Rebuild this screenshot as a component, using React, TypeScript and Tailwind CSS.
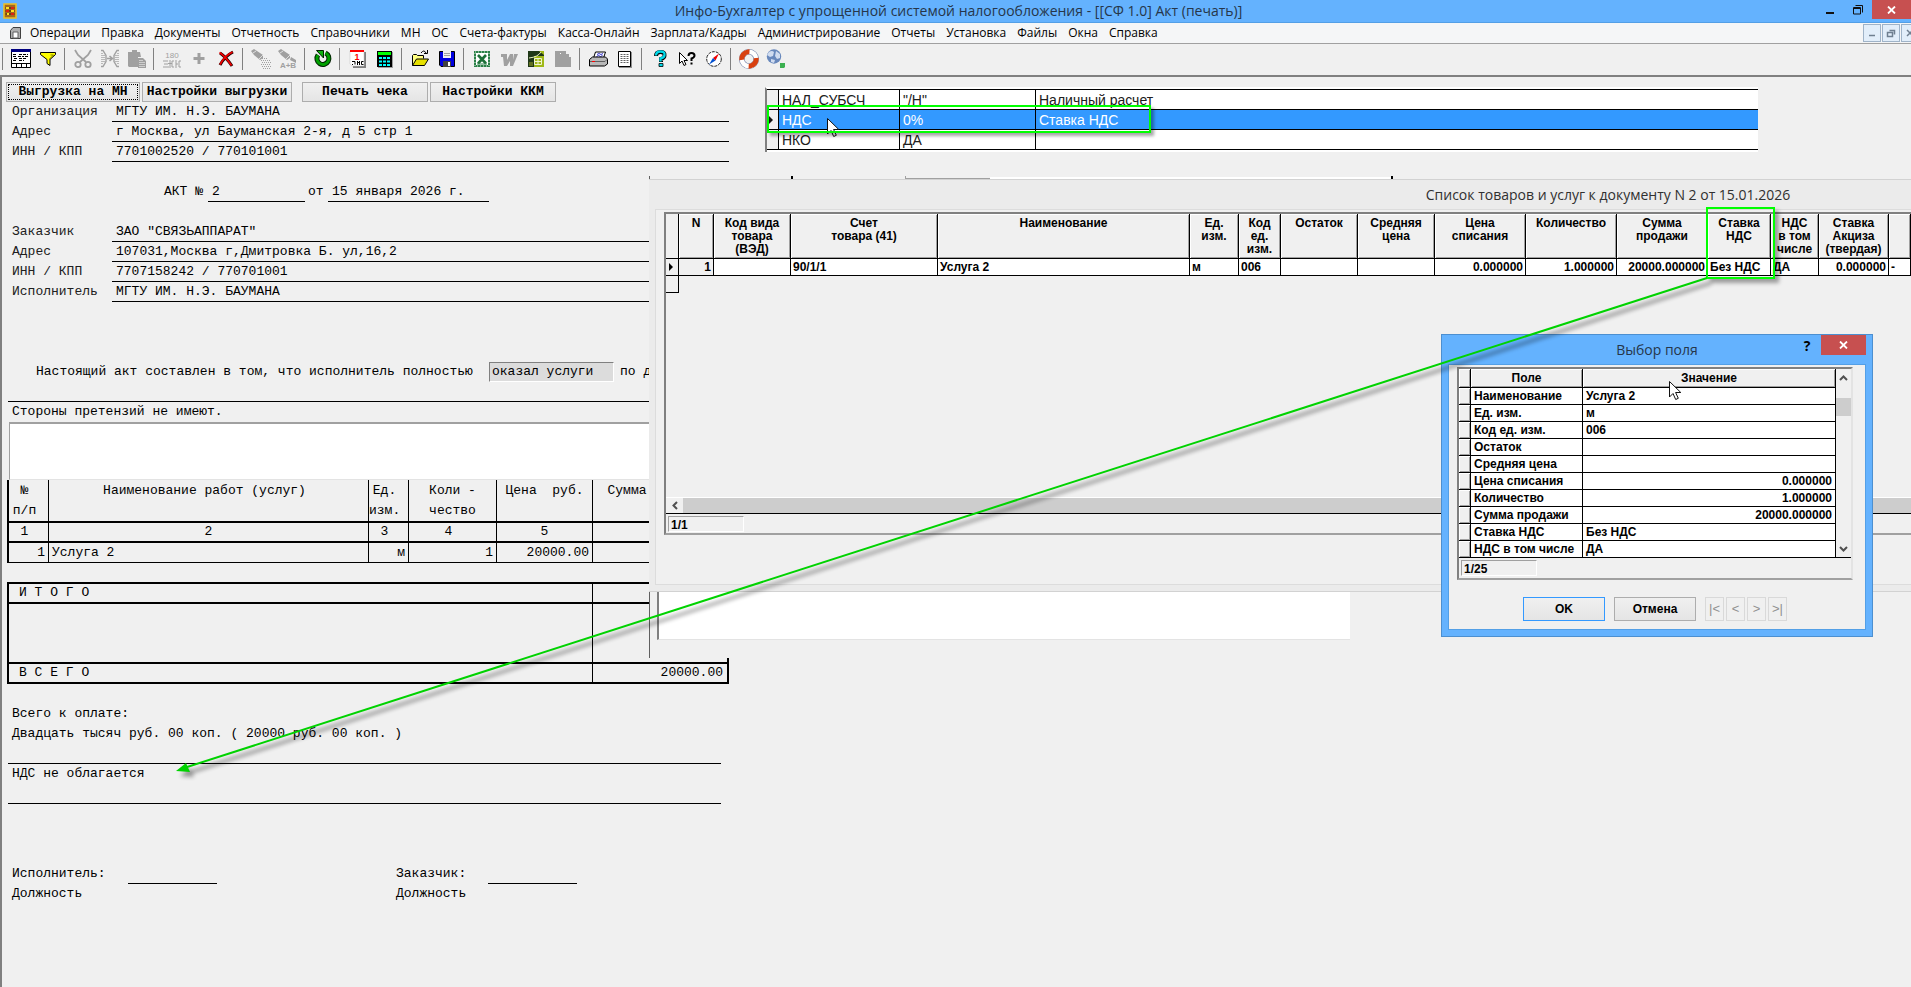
import { ReactNode } from 'react';

const menuItems = [
  'Операции', 'Правка', 'Документы', 'Отчетность', 'Справочники', 'МН', 'ОС', 'Счета-фактуры',
  'Касса-Онлайн', 'Зарплата/Кадры', 'Администрирование', 'Отчеты', 'Установка', 'Файлы', 'Окна', 'Справка',
];

interface Tool {
  name: string;
  icon: ReactNode;
}

const GRAY = '#a0a0a0';

// Toolbar icons, all drawn on a 20x20 grid
const toolGroups: Tool[][] = [
  [
    {
      name: 'Таблица',
      icon: (
        <>
          <path d="M0.5 0.5h19v18h-19z" fill="#fff" stroke="#000" />
          <path d="M0 0h20v3H0z" fill="#000080" />
          <path d="M0 14.5h20M5.5 15v4M10.5 15v4M15.5 15v4" stroke="#000" />
          <path d="M2 5.5h4M8 5.5h9M2 7.5h3M7 7.5h6M14 7.5h3M3 9.5h3M8 9.5h8M2 11.5h4M8 11.5h5" stroke="#000" strokeDasharray="3 1" />
        </>
      ),
    },
    {
      name: 'Фильтр',
      icon: (
        <>
          <path d="M2.5 3.5h15v2l-5.5 5v6l-3 -2v-4l-6.5 -5z" fill="#ffff00" stroke="#000" />
          <path d="M12.5 6l3 0 -4 4v5" fill="none" stroke="#808000" />
        </>
      ),
    },
  ],
  [
    {
      name: 'Вырезать',
      icon: (
        <g fill="none" stroke={GRAY} strokeWidth="1.8">
          <path d="M2 1l3 5 8 7M18 1l-3 5 -8 7" />
          <circle cx="5" cy="15.5" r="2.7" />
          <circle cx="15" cy="15.5" r="2.7" />
        </g>
      ),
    },
    {
      name: 'Разделить',
      icon: (
        <g fill="none" stroke={GRAY}>
          <path d="M1 1.5h2l3 5v6l-3 5h-2M19 1.500h-2l-3 5v6l3 5h2" strokeWidth="1.4" />
          <path d="M2 4v12M4 6v8M18 4v12M16 6v8" strokeDasharray="1 1" strokeWidth="1.4" />
          <path d="M7 9.5h5M9.500 7l3 2.5 -3 2.5" strokeWidth="1.6" />
        </g>
      ),
    },
    {
      name: 'Вставить',
      icon: (
        <>
          <path d="M1 3h4V1h5v2h3l1 5h-3v10H2l-1 -1z" fill={GRAY} />
          <path d="M11 9h5l3 3v7h-8z" fill={GRAY} />
          <path d="M12.5 11.5h3M12.5 13.5h5M12.5 15.5h5M12.5 17.5h5" stroke="#fff" strokeDasharray="1 1" />
        </>
      ),
    },
  ],
  [
    {
      name: 'Сумма прописью',
      icon: (
        <>
          <text x="10" y="9" fontSize="8" textAnchor="middle" fill={GRAY} fontFamily="Liberation Sans">180</text>
          <path d="M1 12h5M2 15h4M1 18h6M8 11v8M12 12h-2v6h2M14 11v8M14 15h2M19 12h-2v6h2M6 14.5h4" stroke={GRAY} fill="none" />
        </>
      ),
    },
    { name: 'Добавить', icon: <path d="M10 4v11M4.5 9.5h11" stroke={GRAY} strokeWidth="3" /> },
    {
      name: 'Удалить',
      icon: (
        <>
          <path d="M4 4q6 4 12 13M17 3q-8 4 -13 13" stroke="#200000" strokeWidth="3" fill="none" />
          <path d="M3.500 3.500q6 4 12 13M16.5 3q-8 4 -12.5 12.500" stroke="#f00000" strokeWidth="1.800" fill="none" />
        </>
      ),
    },
  ],
  [
    {
      name: 'Найти',
      icon: (
        <>
          <path d="M0 2l3 -2 9 6v3l-3 2 -6 -5z" fill={GRAY} />
          <path d="M2 4l3 -2M8 10l4 -4" stroke="#e0e0e0" />
          <path d="M11 9.500h5M10 11.5h9M11 13.5h9M10 15.5h9M11 17.5h9M12 19.5h7" stroke={GRAY} strokeDasharray="1 1" />
        </>
      ),
    },
    {
      name: 'Заменить',
      icon: (
        <>
          <path d="M0 2l3 -2 9 6v3l-3 2 -6 -5z M13 8l5 3v3l-6 -3z" fill={GRAY} />
          <path d="M2 4l3 -2M8 10l4 -4" stroke="#e0e0e0" />
          <text x="10" y="19" fontSize="8" fontWeight="700" textAnchor="middle" fill={GRAY} fontFamily="Liberation Sans">A+B</text>
        </>
      ),
    },
  ],
  [
    {
      name: 'Обновить',
      icon: (
        <>
          <path d="M12.500 4A6 6 0 1 1 5 6" fill="none" stroke="#002000" strokeWidth="5" />
          <path d="M12.500 4A6 6 0 1 1 5 6" fill="none" stroke="#00a000" strokeWidth="3" />
          <path d="M3.500 1.500h7v7.500z" fill="#10b010" stroke="#002000" />
        </>
      ),
    },
  ],
  [
    {
      name: 'Календарь',
      icon: (
        <>
          <path d="M5 3h13v16H5z" fill="#808080" />
          <path d="M2 2h14v15H4l-2 -2z" fill="#fff" stroke="#c0c0c0" strokeWidth="0.5" />
          <path d="M2 1h14v2H2z" fill="#f00" />
          <text x="9" y="11" fontSize="9" fontWeight="700" textAnchor="middle" fill="#f00" fontFamily="Liberation Sans">1</text>
          <path d="M4 12.5h3v3M9.500 12v4M9.500 13.500h2M11.500 12v4M15.500 12.5h-2v3h2M4 15.500h1" stroke="#000" fill="none" />
        </>
      ),
    },
    {
      name: 'Калькулятор',
      icon: (
        <>
          <path d="M3 3h15v16H3z" fill="#a0a0a0" />
          <path d="M2 2h15v16H2z" fill="#000" />
          <path d="M3 3h13v3H3z" fill="#00ff00" />
          <path d="M4 9h11M4 12.500h11M4 16h11" stroke="#00ffff" strokeWidth="2" strokeDasharray="3 1" />
        </>
      ),
    },
  ],
  [
    {
      name: 'Открыть',
      icon: (
        <>
          <path d="M2.5 16.5v-10l1 -1h3l1 1h6v3" fill="#ffff80" stroke="#000" />
          <path d="M2.5 16.5l4 -6.5h12l-4 6.5z" fill="#e6e000" stroke="#000" />
          <path d="M11 4q3 -4 5 0M17.500 1v3.5h-3.500" fill="none" stroke="#000" />
        </>
      ),
    },
    {
      name: 'Сохранить',
      icon: (
        <>
          <path d="M2.5 2.5h15v15H4l-1.5 -1.5z" fill="#0000e0" stroke="#000" />
          <path d="M6 2h8v7H6z" fill="#f0f0f0" />
          <path d="M7 4.500h6M7 6.500h6" stroke="#a0a0a0" />
          <path d="M6 12h8v6H6z" fill="#404040" />
          <path d="M11 13h2v4h-2z" fill="#fff" />
        </>
      ),
    },
  ],
  [
    {
      name: 'Excel',
      icon: (
        <>
          <path d="M3 3h14v14H3z" fill="#fff" stroke="#2a8048" strokeWidth="2" />
          <path d="M3 3h14v14H3z" fill="none" stroke="#d8ecd8" strokeDasharray="1 2" />
          <path d="M6 6l8 8.5M14 6l-8 8.5" stroke="#1d7038" strokeWidth="2.6" />
          <path d="M5 15h10" stroke="#2a8048" />
        </>
      ),
    },
    { name: 'Word', icon: <path d="M2 5h6v2l0 4 3 -6h3l0 6 1 -6h4l-5 12h-3v-5l-3 5h-3l-1 -9h-2z" fill={GRAY} /> },
    {
      name: 'Calc',
      icon: (
        <>
          <path d="M2 2h16v16H2z" fill="#203818" />
          <path d="M8 7h10v11H8zM13 2h5v4z" fill="#a0b818" />
          <path d="M3 9q9 -1 12 -6" stroke="#e8f0c0" fill="none" />
          <path d="M3 13h4v4H3z" fill="#607020" />
          <path d="M8.500 9.500h7v6h-7zM8.500 12.500h7M12 9.500v6" stroke="#f0f4d0" fill="none" />
        </>
      ),
    },
    {
      name: 'Writer',
      icon: (
        <>
          <path d="M2 2h11v3h3v3h2v10H2z" fill={GRAY} />
          <path d="M7 4h1v1H7z" fill="#fff" />
        </>
      ),
    },
  ],
  [
    {
      name: 'Печать',
      icon: (
        <>
          <path d="M5.5 9l2 -6h10l-2 6z" fill="#fff" stroke="#000" />
          <path d="M9 5.5l2 -1 2 1 2 -1M8.5 7.5l2 -1 2 1 2 -1" stroke="#3030d0" fill="none" />
          <path d="M1.5 10.5l3 -2.5h13l2 2v5l-3 2h-15z" fill="#b8b8b8" stroke="#000" />
          <path d="M2 12.5h15l2 -2" stroke="#606060" fill="none" />
          <path d="M4 12h3v1H4z" fill="#f00" />
        </>
      ),
    },
    {
      name: 'Просмотр',
      icon: (
        <>
          <path d="M4 3h13v16H4z" fill="#909090" />
          <path d="M3.5 2.5h12v15h-12z" fill="#fff" stroke="#000" />
          <path d="M5.5 5.5h8M5.5 7.5h8M5.5 9.5h8M5.5 11.5h8M5.5 13.5h8" stroke="#606060" strokeDasharray="2 1" />
        </>
      ),
    },
  ],
  [
    {
      name: 'Справка',
      icon: (
        <>
          <path d="M6 7q0 -4 4.5 -4t4 3.5q0 2.5 -3.5 3.5v3" fill="none" stroke="#000" strokeWidth="4" />
          <path d="M6 6.5q0 -4 4.5 -4t4 3.5q0 2.5 -4 3.5v3" fill="none" stroke="#00d8e8" strokeWidth="2.4" />
          <path d="M9 14.5h4v3H9z" fill="#00d8e8" stroke="#000" strokeWidth="0.8" />
        </>
      ),
    },
    {
      name: 'Контекстная справка',
      icon: (
        <>
          <path d="M2.5 3.5v11l2.5 -2.5 2 4.5 2 -1 -2 -4h3.5z" fill="#fff" stroke="#000" />
          <path d="M11.5 7q0 -3 3 -3t3 2.5q0 2 -3 3v2.5M13.5 14.5h2" fill="none" stroke="#000" strokeWidth="2" />
        </>
      ),
    },
    {
      name: 'Компас',
      icon: (
        <>
          <circle cx="10" cy="10" r="7.3" fill="#fff" stroke="#202020" strokeDasharray="3 1" />
          <path d="M15 4.5l-3.5 7 -2.5 -2.5z" fill="#f00000" />
          <path d="M5 15.5l6.5 -4 -2.5 -2.5z" fill="#0050d0" />
        </>
      ),
    },
  ],
  [
    {
      name: 'Поддержка',
      icon: (
        <>
          <circle cx="10" cy="10" r="7.2" fill="none" stroke="#7080a8" strokeWidth="5.6" />
          <circle cx="10" cy="10" r="7.2" fill="none" stroke="#fff" strokeWidth="4.4" />
          <circle cx="10" cy="10" r="7.2" fill="none" stroke="#d84010" strokeWidth="5" strokeDasharray="12.6 10" transform="rotate(-8 10 10)" />
        </>
      ),
    },
    {
      name: 'Интернет',
      icon: (
        <>
          <circle cx="8" cy="7.5" r="7.2" fill="#6888bc" />
          <path d="M3 3q3 -2 5 0l-1 4 -3 1 -3 -2zM10 2l4 3v4l-3 1 -2 -3zM5 10l4 1 -1 3 -3 -1z" fill="#d0dcf0" />
          <path d="M14 14h5v4l-1 1h-4z" fill="#3cb050" />
        </>
      ),
    },
  ],
];

const params = [
  { name: 'НАЛ_СУБСЧ', value: '"/Н"', note: 'Наличный расчет' },
  { name: 'НДС', value: '0%', note: 'Ставка НДС', selected: true },
  { name: 'НКО', value: 'ДА', note: '' },
];

interface Column {
  title: string[];
  value: string;
  width: string;
  right?: boolean;
}

const columns: Column[] = [
  { title: ['N'], value: '1', width: 'w-[35px]', right: true },
  { title: ['Код вида', 'товара', '(ВЭД)'], value: '', width: 'w-[77px]' },
  { title: ['Счет', 'товара (41)'], value: '90/1/1', width: 'w-[147px]' },
  { title: ['Наименование'], value: 'Услуга 2', width: 'w-[252px]' },
  { title: ['Ед.', 'изм.'], value: 'м', width: 'w-[49px]' },
  { title: ['Код', 'ед.', 'изм.'], value: '006', width: 'w-[42px]' },
  { title: ['Остаток'], value: '', width: 'w-[77px]' },
  { title: ['Средняя', 'цена'], value: '', width: 'w-[77px]' },
  { title: ['Цена', 'списания'], value: '0.000000', width: 'w-[91px]', right: true },
  { title: ['Количество'], value: '1.000000', width: 'w-[91px]', right: true },
  { title: ['Сумма', 'продажи'], value: '20000.000000', width: 'w-[91px]', right: true },
  { title: ['Ставка', 'НДС'], value: 'Без НДС', width: 'w-[63px]' },
  { title: ['НДС', 'в том', 'числе'], value: 'ДА', width: 'w-[48px]' },
  { title: ['Ставка', 'Акциза', '(твердая)'], value: '0.000000', width: 'w-[70px]', right: true },
  { title: [''], value: '-', width: 'w-auto' },
];

const fields = [
  { name: 'Наименование', value: 'Услуга 2' },
  { name: 'Ед. изм.', value: 'м' },
  { name: 'Код ед. изм.', value: '006' },
  { name: 'Остаток', value: '' },
  { name: 'Средняя цена', value: '' },
  { name: 'Цена списания', value: '0.000000', right: true },
  { name: 'Количество', value: '1.000000', right: true },
  { name: 'Сумма продажи', value: '20000.000000', right: true },
  { name: 'Ставка НДС', value: 'Без НДС' },
  { name: 'НДС в том числе', value: 'ДА' },
];

const signatures = [
  { id: 'sign-executor', label: 'Исполнитель:', width: 'w-[116px]' },
  { id: 'sign-client', label: 'Заказчик:', width: 'w-[92px]' },
];

function DocField({ id, label, value }: { id: string; label: string; value: string }) {
  return (
    <div className="flex h-5 items-stretch pl-1">
      <label htmlFor={id} className="w-[100px] leading-5 text-[#202020]">{label}</label>
      <input id={id} defaultValue={value} className="min-w-0 flex-1 border-b border-black bg-transparent pl-1 font-medium outline-none" />
    </div>
  );
}

function DocButton({ children, className }: { children: ReactNode; className: string }) {
  return (
    <button className={`h-5 border border-[#adadad] bg-linear-to-b from-[#f0f0f0] to-[#e5e5e5] font-bold leading-4 whitespace-nowrap ${className}`}>
      {children}
    </button>
  );
}

function Pointer({ className }: { className: string }) {
  return (
    <svg className={`absolute pointer-events-none ${className}`} width="13" height="20" viewBox="0 0 13 20">
      <path d="M0.5 0.5v15.5l3.5 -3.5 2.7 6 2.6 -1.2 -2.7 -5.8h5.2z" fill="#fff" stroke="#111" />
    </svg>
  );
}

function TitleBar() {
  return (
    <header className="flex h-[23px] items-center border-b border-[#539fe6] bg-[#64b2fe]">
      <svg className="ml-[3px] w-[14px] shrink-0" height="16" viewBox="0 0 14 16">
        <path d="M1 1h12v14H1z" fill="#a06820" stroke="#f0c020" strokeWidth="1.5" />
        <path d="M2.5 5h9M2.5 8h9M2.5 11h9" stroke="#402000" />
        <path d="M3 5h3M8 8h3M4 11h2" stroke="#ffe020" strokeWidth="2" />
        <path d="M8 5h3M3 8h3M8 11h3" stroke="#e02010" strokeWidth="2" />
      </svg>
      <h1 className="flex-1 pl-[84px] text-center font-['Open_Sans',sans-serif] text-[14px] leading-5 text-[#26364a]">
        Инфо-Бухгалтер с упрощенной системой налогообложения - [[СФ 1.0] Акт (печать)]
      </h1>
      <div className="flex items-start self-stretch">
        <button aria-label="Свернуть" className="flex h-[19px] w-7 items-center justify-center">
          <svg width="10" height="10"><path d="M1 7h8v2H1z" fill="#111" /></svg>
        </button>
        <button aria-label="Развернуть" className="flex h-[19px] w-7 items-center justify-center">
          <svg width="10" height="11"><path d="M0.5 3.5h7v6.5h-7zM0.5 4.5h7M2.5 1.5h7v7" fill="none" stroke="#111" /></svg>
        </button>
        <button aria-label="Закрыть" className="flex h-[19px] w-[39px] items-center justify-center bg-[#c75050]">
          <svg width="9" height="8"><path d="M1 0.5l7 7M8 0.5l-7 7" stroke="#fff" strokeWidth="1.8" /></svg>
        </button>
      </div>
    </header>
  );
}

function MenuBar() {
  return (
    <nav className="flex h-[21px] items-center border-b border-[#a0a0a0] bg-[#f5f6f7] font-['Open_Sans',sans-serif] text-[12px] text-black">
      <svg className="ml-[10px] shrink-0" width="11" height="12" viewBox="0 0 11 12">
        <path d="M0.5 3.5l2.5 -3h7.5v11h-10z" fill="#b0b0b0" stroke="#404040" />
        <path d="M3 5h5v6H3z" fill="#fff" stroke="#606060" />
      </svg>
      <div className="ml-[9px] flex gap-[11px]">
        {menuItems.map((item) => (
          <a key={item} href="#" className="leading-5 whitespace-nowrap">{item}</a>
        ))}
      </div>
      <div className="-mr-2 ml-auto flex shrink-0 gap-px">
        {['M5 10.5h6', 'M4.5 7.5h5v4h-5zM6.5 5.5h5v4', 'M5 5l6 6M11 5l-6 6'].map((d) => (
          <button key={d} aria-label="Окно документа" className="h-[18px] w-[18px] border border-[#9fb3c8] bg-[#e2eefa]">
            <svg width="16" height="16"><path d={d} fill="none" stroke="#6f7f90" strokeWidth="1.5" /></svg>
          </button>
        ))}
      </div>
    </nav>
  );
}

function Toolbar() {
  return (
    <div className="flex h-[33px] items-center border-b-2 border-[#808080] pb-[2px] pl-[2px]">
      {toolGroups.map((group, idx) => (
        <div key={idx} className="mr-[3px] flex items-center">
          <div className="mr-[2px] h-[22px] w-[3px] border-l border-[#808080]"></div>
          {group.map((tool) => (
            <button key={tool.name} aria-label={tool.name} className="flex h-6 w-[27px] items-center justify-center">
              <svg width="20" height="20" viewBox="0 0 20 20">{tool.icon}</svg>
            </button>
          ))}
        </div>
      ))}
    </div>
  );
}

function ActDocument() {
  return (
    <section className="w-[729px] shrink-0 border-l-2 border-[#808080] pt-[5px] font-['Liberation_Mono',monospace] text-[13px] text-black">
      <div className="ml-1 flex">
        <DocButton className="w-[134px] outline-1 -outline-offset-3 outline-dotted outline-black">Выгрузка на МН</DocButton>
        <DocButton className="ml-[2px] w-[150px]">Настройки выгрузки</DocButton>
        <DocButton className="ml-[10px] w-[126px]">Печать чека</DocButton>
        <DocButton className="ml-[2px] w-[126px]">Настройки ККМ</DocButton>
      </div>

      <div className="ml-[6px]">
        <DocField id="org" label="Организация" value="МГТУ ИМ. Н.Э. БАУМАНА" />
        <DocField id="org-address" label="Адрес" value="г Москва, ул Бауманская 2-я, д 5 стр 1" />
        <DocField id="org-inn" label="ИНН / КПП" value="7701002520 / 770101001" />

        <div className="mt-5 flex h-5 pl-[156px]">
          <label htmlFor="act-no" className="w-11 leading-5">АКТ №</label>
          <input id="act-no" defaultValue="2" className="w-[97px] border-b border-black bg-transparent pl-1" />
          <label htmlFor="act-date" className="w-[23px] pl-[3px] leading-5">от</label>
          <input id="act-date" defaultValue="15 января 2026 г." className="w-[161px] border-b border-black bg-transparent pl-1" />
        </div>

        <div className="mt-5">
          <DocField id="client" label="Заказчик" value={'ЗАО "СВЯЗЬАППАРАТ"'} />
          <DocField id="client-address" label="Адрес" value="107031,Москва г,Дмитровка Б. ул,16,2" />
          <DocField id="client-inn" label="ИНН / КПП" value="7707158242 / 770701001" />
          <DocField id="executor" label="Исполнитель" value="МГТУ ИМ. Н.Э. БАУМАНА" />
        </div>

        <div className="mt-[60px] flex h-5 pl-7 leading-5 whitespace-nowrap">
          <label htmlFor="action" className="w-[453px] shrink-0">Настоящий акт составлен в том, что исполнитель полностью</label>
          <input id="action" defaultValue="оказал услуги" className="w-[125px] shrink-0 border border-t-[#808080] border-r-white border-b-white border-l-[#808080] bg-[#dcdcdc] pl-[2px]" />
          <span className="ml-[6px]">по договору</span>
        </div>
        <div className="h-5 border-b border-black"></div>
        <label htmlFor="remarks" className="block h-5 pl-1 leading-5">Стороны претензий не имеют.</label>
        <textarea id="remarks" className="ml-px block h-[58px] w-[719px] resize-none border border-t-2 border-[#a0a0a0] border-b-[#e3e3e3] bg-white"></textarea>

        <table className="-ml-px w-[722px] table-fixed border-separate border-spacing-0 border-l-2 border-black">
          <colgroup>
            <col className="w-[40px]" />
            <col className="w-[320px]" />
            <col className="w-[40px]" />
            <col className="w-[88px]" />
            <col className="w-[96px]" />
            <col />
          </colgroup>
          <thead>
            <tr className="h-[42px] leading-5 *:border-r *:border-b-2 *:border-black *:py-0 *:pt-px *:align-top *:font-normal">
              <th className="pr-2 pl-0">№<br />п/п</th>
              <th className="pr-2 pl-0">Наименование работ (услуг)</th>
              <th className="pr-2 pl-0">Ед.<br />изм.</th>
              <th className="px-0">Коли -<br />чество</th>
              <th className="px-0 whitespace-pre">Цена  руб.</th>
              <th className="pr-7 pl-0">Сумма  руб.</th>
            </tr>
          </thead>
          <tbody>
            <tr className="h-5 text-center leading-[18px] *:border-r *:border-b-2 *:border-black *:py-0">
              <td className="pr-2 pl-0">1</td>
              <td className="px-0">2</td>
              <td className="pr-2 pl-0">3</td>
              <td className="pr-2 pl-0">4</td>
              <td className="px-0">5</td>
              <td className="px-0">6</td>
            </tr>
            <tr className="h-5 leading-[19px] *:border-r *:border-b *:border-black *:px-[3px] *:py-0">
              <td className="text-right">1</td>
              <td>Услуга 2</td>
              <td className="text-right">м</td>
              <td className="text-right">1</td>
              <td className="text-right">20000.00</td>
              <td className="text-right">20000.00</td>
            </tr>
          </tbody>
        </table>

        <table className="mt-[19px] -ml-px w-[722px] table-fixed border-separate border-spacing-0 border-2 border-b-0 border-black">
          <tbody>
            <tr className="h-5 leading-[18px] *:border-b-2 *:border-black *:py-0">
              <td className="w-[584px] border-r pl-[10px]">И Т О Г О</td>
              <td></td>
            </tr>
            <tr className="h-[60px] *:border-b-2 *:border-black">
              <td className="border-r"></td>
              <td></td>
            </tr>
            <tr className="h-5 leading-[18px] *:border-b-2 *:border-black *:py-0">
              <td className="border-r pl-[10px]">В С Е Г О</td>
              <td className="pr-1 text-right">20000.00</td>
            </tr>
          </tbody>
        </table>

        <div className="mt-5 w-[713px] leading-5">
          <p className="pl-1">Всего к оплате:</p>
          <p className="pl-1 font-medium">Двадцать тысяч руб. 00 коп. ( 20000 руб. 00 коп. )</p>
          <div className="h-5 border-b border-black"></div>
          <p className="pl-1 font-medium">НДС не облагается</p>
          <div className="h-5 border-b border-black"></div>
        </div>

        <div className="mt-[60px] flex pl-1 leading-5">
          {signatures.map((sign) => (
            <div key={sign.id} className="w-[384px] shrink-0">
              <div className="flex h-5">
                <label htmlFor={sign.id} className={sign.width}>{sign.label}</label>
                <input id={sign.id} className="w-[89px] border-b border-black bg-transparent" />
              </div>
              <p>Должность</p>
            </div>
          ))}
        </div>
      </div>
    </section>
  );
}

function ParamsTable() {
  return (
    <section className="min-w-0 flex-1 pt-[10px] pr-[153px] pl-9">
      <div className="relative">
        <table className="w-full table-fixed border-separate border-spacing-0 border-t-2 border-l-2 border-t-white border-l-[#808080] bg-white font-['Liberation_Sans',sans-serif] text-[14px] text-[#202020]">
          <colgroup>
            <col className="w-[12px]" />
            <col className="w-[121px]" />
            <col className="w-[136px]" />
            <col />
          </colgroup>
          <tbody>
            {params.map((row) => (
              <tr
                key={row.name}
                className={`h-5 leading-[18px] *:border-t *:border-black *:py-0 ${row.selected ? '*:bg-[#3399ff] text-white' : ''}`}
              >
                <td className="border-r border-black !bg-[#f0f0f0] p-0">
                  {row.selected && <svg width="8" height="10"><path d="M2 1v8l4 -4z" fill="#111" /></svg>}
                </td>
                <td className={`border-r pl-[3px] ${row.selected ? 'border-r-white' : 'border-r-black'}`}>{row.name}</td>
                <td className={`border-r pl-[3px] ${row.selected ? 'border-r-white' : 'border-r-black'}`}>{row.value}</td>
                <td className="pl-[3px]">{row.note}</td>
              </tr>
            ))}
            <tr className="h-[3px] *:border-t *:border-black *:p-0">
              <td colSpan={4}></td>
            </tr>
          </tbody>
        </table>
        <Pointer className="top-[31px] left-[62px]" />
        <div className="absolute top-[18px] left-[2px] h-[28px] w-[384px] border-2 border-[#00ff00] shadow-[3px_3px_3px_rgba(0,0,0,0.35)]"></div>
      </div>
    </section>
  );
}

function GoodsWindow() {
  return (
    <section className="absolute top-[176px] right-0 left-[649px] overflow-hidden bg-[#f0f0f0]">
      {/* Edges of the form lying under the goods list */}
      <div className="flex h-[3px] items-start border-l border-[#606060]">
        <div className="ml-[141px] h-[3px] w-[2px] bg-black"></div>
        <div className="ml-28 h-[3px] w-[85px] border-b border-l border-[#a0a0a0]"></div>
        <div className="h-[3px] w-[401px] border-b-2 border-white"></div>
        <div className="h-[3px] w-[2px] bg-black"></div>
      </div>

      <div className="border-y border-[#d2d2d2] bg-[#ebebeb] pb-[6px] pl-[6px]">
        <h2 className="h-[29px] pl-[650px] text-center font-['Open_Sans',sans-serif] text-[14px] leading-[30px] text-[#303030]">
          Список товаров и услуг к документу N 2 от 15.01.2026
        </h2>
        <div className="border border-r-0 border-[#dcdcdc] bg-[#f0f0f0] pt-[2px] pb-[49px] pl-2 font-['Liberation_Sans',sans-serif] text-[12px] font-bold text-black">
          <div className="border-t-2 border-b-2 border-l-2 border-[#808080] border-b-[#a0a0a0]">
            <table className="w-full table-fixed border-separate border-spacing-0">
              <thead>
                <tr className="h-[45px] leading-[13px]">
                  <th className="w-[13px] border-r border-b border-black p-0"></th>
                  {columns.map((col, idx) => (
                    <th
                      key={idx}
                      className={`border-r border-b border-black p-0 pt-[3px] align-top font-bold whitespace-nowrap shadow-[inset_1px_1px_#fff,inset_-1px_-1px_#a0a0a0] ${col.width}`}
                    >
                      {col.title.map((line) => (
                        <div key={line}>{line}</div>
                      ))}
                    </th>
                  ))}
                </tr>
              </thead>
              <tbody>
                <tr className="h-[17px] leading-4">
                  <td className="border-r border-b border-black p-0">
                    <svg width="9" height="9"><path d="M3 0v8l4 -4z" fill="#000" /></svg>
                  </td>
                  {columns.map((col, idx) => (
                    <td
                      key={idx}
                      className={`overflow-hidden border-r border-b border-black px-[2px] py-0 whitespace-nowrap ${idx === 0 ? 'bg-[#f0f0f0]' : 'bg-white'} ${col.right ? 'text-right' : ''}`}
                    >
                      {col.value}
                    </td>
                  ))}
                </tr>
                <tr className="h-[17px]">
                  <td className="border-r border-b border-black p-0"></td>
                </tr>
              </tbody>
            </table>
            <div className="mt-[204px] flex h-4 items-center border-t border-white bg-[#cdcdcd]">
              <button aria-label="Влево" className="flex h-full w-[17px] items-center justify-center bg-[#f0f0f0]">
                <svg width="6" height="9"><path d="M5 1l-3.5 3.5 3.5 3.5" fill="none" stroke="#505050" strokeWidth="2" /></svg>
              </button>
            </div>
            <div className="h-[20px] border-t border-black pt-[2px] pl-[2px]">
              <div className="h-4 w-[76px] border border-t-[#a0a0a0] border-r-white border-b-white border-l-[#a0a0a0] pl-[2px] leading-4">1/1</div>
            </div>
          </div>
        </div>
      </div>

      <div className="h-[66px] border-l border-[#606060] pl-[7px]">
        <textarea aria-label="Примечание" className="block h-[48px] w-[693px] resize-none border-b border-l-2 border-b-[#e3e3e3] border-l-[#808080] bg-white"></textarea>
      </div>
    </section>
  );
}

function FieldDialog() {
  return (
    <section
      role="dialog"
      aria-labelledby="dialog-title"
      className="absolute top-[334px] left-[1441px] w-[432px] border border-[#4c8fd0] bg-[#64b2fe] px-[6px] pb-[6px] font-['Liberation_Sans',sans-serif] text-[12px] font-bold text-black"
    >
      <div className="relative flex h-[29px]">
        <h2 id="dialog-title" className="flex-1 text-center font-['Open_Sans',sans-serif] text-[14px] leading-[30px] font-normal text-[#26364a]">Выбор поля</h2>
        <button aria-label="Справка" className="absolute top-0 right-[45px] h-5 w-7 font-['Open_Sans',sans-serif] text-[14px]">?</button>
        <button aria-label="Закрыть" className="absolute top-0 right-0 flex h-5 w-[45px] items-center justify-center bg-[#c75050]">
          <svg width="9" height="8"><path d="M1 0.5l7 7M8 0.5l-7 7" stroke="#fff" strokeWidth="1.8" /></svg>
        </button>
      </div>

      <div className="border border-[#539fe6] bg-[#f0f0f0] pt-[2px] pr-3 pb-2 pl-2">
        <div className="border-2 border-t-[#808080] border-r-[#e3e3e3] border-b-[#a0a0a0] border-l-[#808080]">
          <div className="flex">
            <table className="min-w-0 flex-1 table-fixed border-separate border-spacing-0">
              <thead>
                <tr className="h-[19px] leading-4 *:border-r *:border-b *:border-black *:p-0 *:shadow-[inset_1px_1px_#fff,inset_-1px_-1px_#a0a0a0]">
                  <th className="w-[12px]"></th>
                  <th className="w-[112px]">Поле</th>
                  <th>Значение</th>
                </tr>
              </thead>
              <tbody>
                {fields.map((field) => (
                  <tr key={field.name} className="h-[17px] leading-4 *:border-r *:border-b *:border-black *:px-[3px] *:py-0">
                    <td className="bg-[#f0f0f0] shadow-[inset_1px_1px_#fff,inset_-1px_-1px_#a0a0a0]"></td>
                    <td className="bg-white whitespace-nowrap">{field.name}</td>
                    <td className={`bg-white ${field.right ? 'text-right' : ''}`}>{field.value}</td>
                  </tr>
                ))}
              </tbody>
            </table>
            <div className="flex w-[15px] shrink-0 flex-col items-center border-b border-black pt-[6px] pb-[5px]">
              <svg width="9" height="6"><path d="M1 5l3.5 -3.5 3.5 3.5" fill="none" stroke="#505050" strokeWidth="2" /></svg>
              <div className="mt-[17px] h-[18px] w-full bg-[#cdcdcd]"></div>
              <svg className="mt-auto" width="9" height="6"><path d="M1 1l3.5 3.5 3.5 -3.5" fill="none" stroke="#505050" strokeWidth="2" /></svg>
            </div>
          </div>
          <div className="h-5 pt-[2px] pl-[2px]">
            <div className="h-4 w-[76px] border border-t-[#a0a0a0] border-r-white border-b-white border-l-[#a0a0a0] pl-[2px] leading-4">1/25</div>
          </div>
        </div>

        <div className="mt-[17px] flex h-6 justify-center">
          <button className="w-[82px] border border-[#3399ff] bg-linear-to-b from-[#f0f0f0] to-[#e5e5e5]">OK</button>
          <button className="ml-[9px] w-[82px] border border-[#adadad] bg-linear-to-b from-[#f0f0f0] to-[#e5e5e5]">Отмена</button>
          <div className="ml-[9px] flex gap-[2px] text-[#909090]">
            {['|<', '<', '>', '>|'].map((label) => (
              <button key={label} disabled className="w-[19px] border border-[#d9d9d9] text-[13px] font-normal">{label}</button>
            ))}
          </div>
        </div>
      </div>
      <Pointer className="top-[46px] left-[227px]" />
    </section>
  );
}

// Highlight frame on the VAT column and the arrow leading to the VAT line of the act
function Annotations() {
  return (
    <>
      <div className="pointer-events-none absolute top-[207px] left-[1706px] h-[72px] w-[69px] border-2 border-[#00ff00] shadow-[4px_4px_4px_rgba(0,0,0,0.35)]"></div>
      <svg className="pointer-events-none absolute inset-0 h-full w-full">
        <defs>
          <filter id="soft" x="-5%" y="-5%" width="110%" height="110%">
            <feGaussianBlur stdDeviation="2" />
          </filter>
        </defs>
        <g filter="url(#soft)" opacity="0.4" transform="translate(4 5)">
          <path d="M1707 278L184 768" stroke="#000" strokeWidth="3" />
          <path d="M176 771l10 -8 4 9z" fill="#000" />
        </g>
        <path d="M1707 278L184 768" stroke="#00d200" strokeWidth="2" />
        <path d="M176 771l10 -8 4 9z" fill="#00d200" />
      </svg>
    </>
  );
}

export default function App() {
  return (
    <main className="relative flex min-h-screen flex-col overflow-hidden bg-[#f0f0f0]">
      <TitleBar />
      <MenuBar />
      <Toolbar />
      <div className="flex flex-1">
        <ActDocument />
        <ParamsTable />
      </div>
      <GoodsWindow />
      <FieldDialog />
      <Annotations />
    </main>
  );
}
